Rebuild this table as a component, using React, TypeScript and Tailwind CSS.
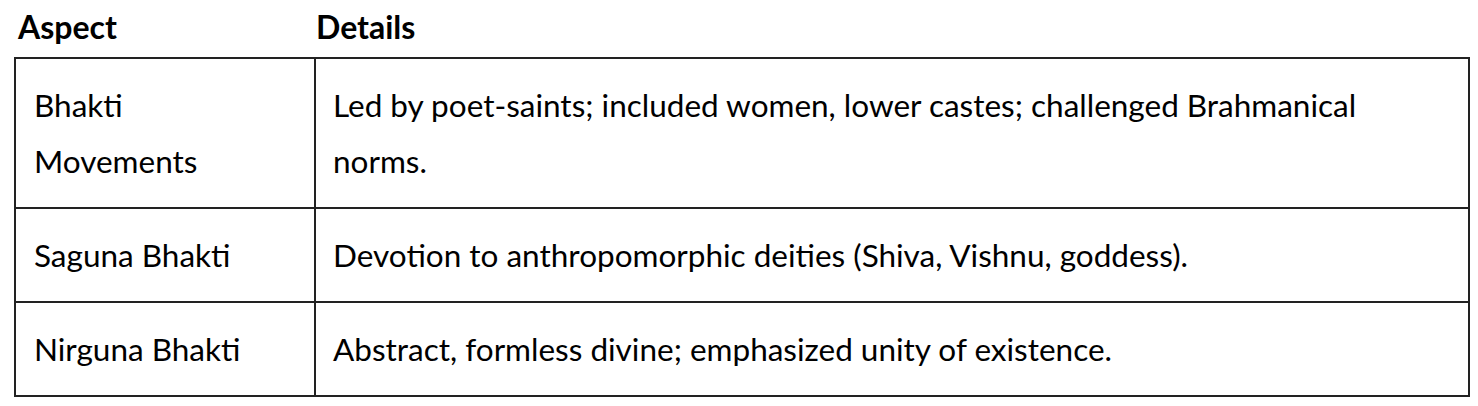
const rows = [
  {
    aspect: "Bhakti Movements",
    details: "Led by poet-saints; included women, lower castes; challenged Brahmanical norms.",
  },
  {
    aspect: "Saguna Bhakti",
    details: "Devotion to anthropomorphic deities (Shiva, Vishnu, goddess).",
  },
  {
    aspect: "Nirguna Bhakti",
    details: "Abstract, formless divine; emphasized unity of existence.",
  },
]

export default function App() {
  return (
    <div className="bg-white w-[1478px] h-[406px] pl-[14px] pr-[8px] text-black font-['Lato',sans-serif]">
      <table className="w-full border-collapse table-fixed">
        <colgroup>
          <col className="w-[300px]" />
          <col />
        </colgroup>
        <thead>
          <tr>
            <th className="text-left font-bold text-[32px] leading-[38px] pt-[8px] pb-[11px] pl-[3px]">Aspect</th>
            <th className="text-left font-bold text-[32px] leading-[38px] pt-[8px] pb-[11px] pl-[1px]">Details</th>
          </tr>
        </thead>
        <tbody>
          {rows.map((row) => (
            <tr key={row.aspect}>
              <td className="border-2 border-[#222] align-middle text-[31.5px] leading-[56px] pl-[18px] pr-[20px] py-[18px]">
                {row.aspect}
              </td>
              <td className="border-2 border-[#222] align-middle text-[31.5px] leading-[56px] pl-[17px] pr-[40px] py-[18px]">
                {row.details}
              </td>
            </tr>
          ))}
        </tbody>
      </table>
    </div>
  )
}
